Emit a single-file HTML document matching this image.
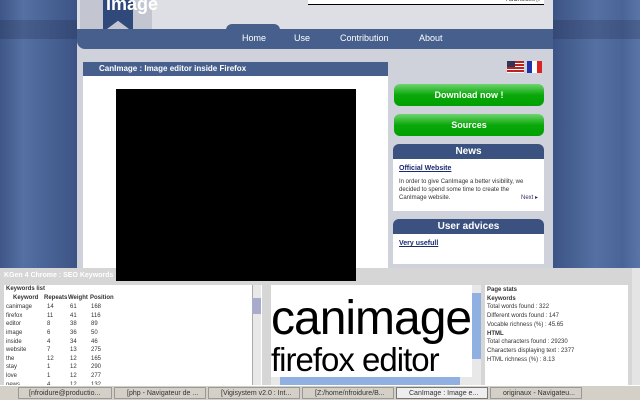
<!DOCTYPE html>
<html><head><style>
*{margin:0;padding:0;box-sizing:border-box}
body{width:640px;height:400px;overflow:hidden;position:relative;font-family:"Liberation Sans",sans-serif;background:#46608f}
.a{position:absolute}
.kw div{height:8.6px;position:relative}
.kw span{position:absolute}
</style></head><body>
<div class="a" style="left:0;top:0;width:77px;height:268px;background:linear-gradient(90deg,#3e5687,#5570a3 30%,#4a6497 60%,#3c5485)"></div>
<div class="a" style="left:553px;top:0;width:87px;height:268px;background:linear-gradient(90deg,#3c5485,#5570a3 50%,#4a6497 80%,#5a75a8)"></div>
<div class="a" style="left:0;top:20px;width:77px;height:19px;background:rgba(30,40,70,.25)"></div>
<div class="a" style="left:553px;top:20px;width:87px;height:19px;background:rgba(30,40,70,.25)"></div>
<div class="a" style="left:77px;top:0;width:476px;height:268px;background:#cfd1db"></div>
<div class="a" style="left:77px;top:0;width:476px;height:30px;background:#dedfe4"></div>
<div class="a" style="left:80px;top:0;width:72px;height:30px;background:#c3c6d0"></div>
<div class="a" style="left:103px;top:0;width:30px;height:32px;background:#2f4a7a;clip-path:polygon(0 0,100% 0,100% 100%,50% 65%,0 100%)"></div>
<div class="a" style="left:106px;top:-6px;color:#fff;font-weight:bold;font-size:18px">Image</div>
<div class="a" style="left:308px;top:0;width:236px;height:5px;background:#fff;border-bottom:1px solid #000"></div>
<div class="a" style="left:506px;top:-4px;font-size:6px;color:#333">AdChoices ▷</div>
<div class="a" style="left:77px;top:29px;width:476px;height:20px;background:#475f8d;border-radius:0 0 0 8px"></div>
<div class="a" style="left:226px;top:24px;width:54px;height:8px;background:#475f8d;border-radius:6px 6px 0 0"></div>
<div class="a" style="left:0;top:33px;width:640px;font-size:9px;color:#fff">
<span class="a" style="left:242px">Home</span><span class="a" style="left:294px">Use</span><span class="a" style="left:340px">Contribution</span><span class="a" style="left:419px">About</span></div>
<div class="a" style="left:83px;top:62px;width:305px;height:14px;background:#475f8d;color:#fff;font-size:8px;font-weight:bold;padding:2px 0 0 16px">CanImage : Image editor inside Firefox</div>
<div class="a" style="left:83px;top:76px;width:305px;height:192px;background:#fff"></div>
<div class="a" style="left:116px;top:89px;width:240px;height:192px;background:#000;z-index:3"></div>
<div class="a" style="left:507px;top:61px;width:17px;height:12px;background:repeating-linear-gradient(#b22 0 2px,#fff 2px 3px)"></div>
<div class="a" style="left:507px;top:61px;width:8px;height:6px;background:#335"></div>
<div class="a" style="left:527px;top:61px;width:15px;height:12px;background:linear-gradient(90deg,#23a 33%,#fff 33% 66%,#d22 66%)"></div>
<div class="a" style="left:394px;top:84px;width:150px;height:22px;border-radius:6px;background:linear-gradient(#6fd46f,#0aa80a 50%,#00a000);color:#fff;font-size:9px;font-weight:bold;text-align:center;line-height:22px">Download now !</div>
<div class="a" style="left:394px;top:114px;width:150px;height:22px;border-radius:6px;background:linear-gradient(#6fd46f,#0aa80a 50%,#00a000);color:#fff;font-size:9px;font-weight:bold;text-align:center;line-height:22px">Sources</div>
<div class="a" style="left:393px;top:144px;width:151px;height:15px;border-radius:6px 6px 0 0;background:#3b5280;color:#fff;font-size:10px;font-weight:bold;text-align:center;line-height:15px">News</div>
<div class="a" style="left:393px;top:159px;width:151px;height:52px;background:#fff;font-size:6px;color:#333;padding:6px 6px;line-height:8px">
<div style="color:#1a2a70;font-weight:bold;text-decoration:underline;font-size:7px;margin-bottom:5px">Official Website</div>
In order to give CanImage a better visibility, we decided to spend some time to create the CanImage website.<span style="float:right;color:#336">Next ▸</span></div>
<div class="a" style="left:393px;top:219px;width:151px;height:15px;border-radius:6px 6px 0 0;background:#3b5280;color:#fff;font-size:10px;font-weight:bold;text-align:center;line-height:15px">User advices</div>
<div class="a" style="left:393px;top:234px;width:151px;height:30px;background:#fff;font-size:7px;color:#1a2a70;font-weight:bold;text-decoration:underline;padding:6px">Very usefull</div>
<div class="a" style="left:0;top:268px;width:640px;height:117px;background:#d6d6d6"></div>
<div class="a" style="left:4px;top:272px;font-size:7px;color:#fff;font-weight:bold">KGen 4 Chrome : SEO Keywords</div>
<div class="a kw" style="left:4px;top:285px;width:258px;height:100px;background:#fff;font-size:6px;color:#333;line-height:8.6px;padding:0 2px;overflow:hidden">
<div><b>Keywords list</b></div>
<div><b><span style="left:7px">Keyword</span><span style="left:38px">Repeats</span><span style="left:62px">Weight</span><span style="left:84px">Position</span></b></div>
<div style="height:1px"></div>
<div><span>canimage</span><span style="left:41px">14</span><span style="left:64px">61</span><span style="left:85px">168</span></div>
<div><span>firefox</span><span style="left:41px">11</span><span style="left:64px">41</span><span style="left:85px">116</span></div>
<div><span>editor</span><span style="left:41px">8</span><span style="left:64px">38</span><span style="left:85px">89</span></div>
<div><span>image</span><span style="left:41px">6</span><span style="left:64px">36</span><span style="left:85px">50</span></div>
<div><span>inside</span><span style="left:41px">4</span><span style="left:64px">34</span><span style="left:85px">46</span></div>
<div><span>website</span><span style="left:41px">7</span><span style="left:64px">13</span><span style="left:85px">275</span></div>
<div><span>the</span><span style="left:41px">12</span><span style="left:64px">12</span><span style="left:85px">165</span></div>
<div><span>stay</span><span style="left:41px">1</span><span style="left:64px">12</span><span style="left:85px">290</span></div>
<div><span>love</span><span style="left:41px">1</span><span style="left:64px">12</span><span style="left:85px">277</span></div>
<div><span>news</span><span style="left:41px">4</span><span style="left:64px">12</span><span style="left:85px">132</span></div>
</div>
<div class="a" style="left:252px;top:285px;width:9px;height:100px;background:#e8e8e8;border-left:1px solid #aaa"></div>
<div class="a" style="left:252px;top:298px;width:9px;height:16px;background:#aac"></div>
<div class="a" style="left:271px;top:285px;width:210px;height:100px;background:#fff;overflow:hidden">
<div style="font-size:48px;line-height:48px;margin-top:10px;color:#000;letter-spacing:-1px">canimage</div>
<div style="font-size:33px;line-height:34px;margin-top:0px;color:#000;letter-spacing:-1px">firefox editor</div></div>
<div class="a" style="left:472px;top:285px;width:9px;height:100px;background:#e8e8e8"></div>
<div class="a" style="left:472px;top:293px;width:9px;height:66px;background:#8fb0e0"></div>
<div class="a" style="left:271px;top:377px;width:210px;height:8px;background:#e8e8e8"></div>
<div class="a" style="left:280px;top:377px;width:180px;height:8px;background:#8fb0e0"></div>
<div class="a" style="left:485px;top:285px;width:143px;height:100px;background:#fff;font-size:6px;color:#333;line-height:8.7px;padding:1px 2px"><b>Page stats</b><br><b>Keywords</b><br>Total words found : 322<br>Different words found : 147<br>Vocable richness (%) : 45.65<br><b>HTML</b><br>Total characters found : 29230<br>Characters displaying text : 2377<br>HTML richness (%) : 8.13</div>
<div class="a" style="left:632px;top:268px;width:8px;height:117px;background:#e4e4e4"></div>
<div class="a" style="left:0;top:385px;width:640px;height:15px;background:#d4d0c8;border-top:1px solid #fff;font-size:7px;color:#333;white-space:nowrap">
<span class="a" style="left:18px;top:1px;width:94px;height:12px;border:1px solid #999;padding:2px 10px">[nfroidure@productio...</span>
<span class="a" style="left:114px;top:1px;width:92px;height:12px;border:1px solid #999;padding:2px 12px">[php - Navigateur de ...</span>
<span class="a" style="left:208px;top:1px;width:92px;height:12px;border:1px solid #999;padding:2px 12px">[Vigisystem v2.0 : Int...</span>
<span class="a" style="left:302px;top:1px;width:92px;height:12px;border:1px solid #999;padding:2px 12px">[Z:/home/nfroidure/B...</span>
<span class="a" style="left:396px;top:1px;width:92px;height:12px;border:1px solid #777;background:#eee;padding:2px 12px">CanImage : Image e...</span>
<span class="a" style="left:490px;top:1px;width:92px;height:12px;border:1px solid #999;padding:2px 12px">originaux - Navigateu...</span>
</div>
</body></html>
